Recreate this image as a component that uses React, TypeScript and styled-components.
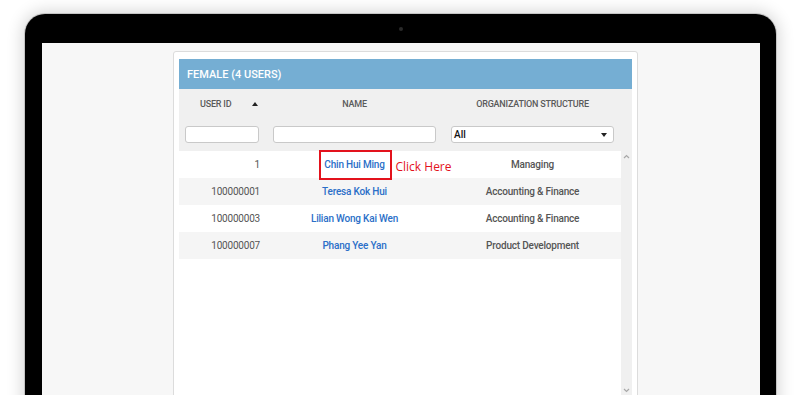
import React from 'react';
import styled, { createGlobalStyle } from 'styled-components';

// Laptop mockup with the user list panel

const GlobalStyle = createGlobalStyle`
  html, body {
    margin: 0;
    padding: 0;
    background: #ffffff;
    height: 395px;
    overflow: hidden;
  }
  body {
    font-family: Roboto, "Liberation Sans", sans-serif;
  }
`;

const Page = styled.div`
  padding: 14px 0 0 25px;
`;

const Bezel = styled.div`
  width: 751px;
  background: #000;
  border-radius: 20px 20px 0 0;
  box-shadow: 0 0 0 1px #c4c4c4, 0 0 16px 3px rgba(0, 0, 0, 0.16);
`;

const TopBar = styled.div`
  height: 29px;
  display: flex;
  align-items: center;
  justify-content: center;
`;

const Camera = styled.div`
  width: 4px;
  height: 4px;
  border-radius: 50%;
  background: #2a2a2a;
`;

const Screen = styled.div`
  margin: 0 16px 0 17px;
  height: 360px;
  overflow: hidden;
  background: #f7f7f7;
  padding: 8px 0 0 131px;
`;

const Panel = styled.div`
  width: 453px;
  height: 360px;
  background: #fff;
  border: 1px solid #dcdcdc;
  border-radius: 3px;
  padding: 7px 5px 0 5px;
`;

const PanelTitle = styled.div`
  height: 30px;
  background: #75aed3;
  color: #fff;
  font-size: 11px;
  font-weight: 500;
  display: flex;
  align-items: center;
  padding-left: 8px;
`;

const HeadArea = styled.div`
  background: #f0f0f0;
  height: 62px;
  display: grid;
  grid-template-columns: 86px 179px 177px 11px;
  grid-template-rows: 29px 33px;
`;

const ColTitle = styled.div<{ $sortable?: boolean }>`
  display: flex;
  align-items: center;
  justify-content: ${(p) => (p.$sortable ? 'flex-start' : 'center')};
  padding-left: ${(p) => (p.$sortable ? '21px' : '0')};
  font-size: 9px;
  font-weight: 500;
  letter-spacing: -0.2px;
  color: #5a5a5a;
  padding-top: 1px;
`;

const SortArrow = styled.span`
  margin-left: auto;
  margin-right: 7px;
  width: 0;
  height: 0;
  border-left: 3px solid transparent;
  border-right: 3px solid transparent;
  border-bottom: 4px solid #222;
`;

const FilterCell = styled.div`
  display: flex;
  justify-content: center;
  padding-top: 8px;
`;

const FilterInput = styled.div<{ $w: number }>`
  width: ${(p) => p.$w}px;
  height: 17px;
  box-sizing: border-box;
  background: #fff;
  border: 1px solid #c9c9c9;
  border-radius: 3px;
`;

const SelectBox = styled(FilterInput)`
  display: flex;
  align-items: center;
  justify-content: space-between;
  padding: 0 6px 0 2px;
  font-size: 10px;
  font-weight: 500;
  color: #111;
`;

const Caret = styled.span`
  width: 0;
  height: 0;
  border-left: 3px solid transparent;
  border-right: 3px solid transparent;
  border-top: 4px solid #222;
`;

const BodyArea = styled.div`
  display: flex;
  height: 244px;
`;

const Rows = styled.div`
  flex: 1;
  display: flex;
  flex-direction: column;
`;

const Row = styled.div<{ $alt: boolean }>`
  display: grid;
  grid-template-columns: 86px 179px 177px;
  height: 27px;
  background: ${(p) => (p.$alt ? '#f5f5f5' : '#fff')};
  font-size: 10px;
  letter-spacing: -0.2px;
`;

const IdCell = styled.div`
  display: flex;
  align-items: center;
  justify-content: flex-end;
  padding-right: 5px;
  color: #555;
`;

const NameCell = styled.div`
  position: relative;
  display: flex;
  align-items: center;
  justify-content: center;
  color: #2b6fc8;
  font-weight: 500;
`;

const OrgCell = styled.div`
  display: flex;
  align-items: center;
  justify-content: center;
  color: #555;
  font-weight: 500;
`;

const Highlight = styled.div`
  position: absolute;
  left: calc(50% - 36px);
  top: -1px;
  width: 73px;
  height: 30px;
  box-sizing: border-box;
  border: 2px solid #e3121c;
`;

const ClickHint = styled.div`
  position: absolute;
  left: calc(50% + 41px);
  top: 7px;
  font-family: "Open Sans", "Liberation Sans", sans-serif;
  letter-spacing: 0;
  font-weight: normal;
  font-size: 12px;
  color: #e3121c;
  white-space: nowrap;
`;

const ScrollTrack = styled.div`
  width: 11px;
  background: #f0f0f0;
  display: flex;
  flex-direction: column;
  align-items: center;
  justify-content: space-between;
  padding: 3px 0 2px;
  box-sizing: border-box;
`;

const Chevron = ({ up }: { up?: boolean }) => (
  <svg width="7" height="5" viewBox="0 0 7 5">
    <path
      d={up ? 'M1 4 L3.5 1.5 L6 4' : 'M1 1 L3.5 3.5 L6 1'}
      fill="none"
      stroke="#a8a8a8"
      strokeWidth="1.2"
    />
  </svg>
);

const users = [
  { id: '1', name: 'Chin Hui Ming', org: 'Managing' },
  { id: '100000001', name: 'Teresa Kok Hui', org: 'Accounting & Finance' },
  { id: '100000003', name: 'Lilian Wong Kai Wen', org: 'Accounting & Finance' },
  { id: '100000007', name: 'Phang Yee Yan', org: 'Product Development' },
];

const App: React.FC = () => {
  return (
    <>
      <GlobalStyle />
      <Page>
        <Bezel>
          <TopBar>
            <Camera />
          </TopBar>
          <Screen>
            <Panel>
              <PanelTitle>FEMALE (4 USERS)</PanelTitle>
              <HeadArea>
                <ColTitle $sortable>
                  USER ID
                  <SortArrow />
                </ColTitle>
                <ColTitle>NAME</ColTitle>
                <ColTitle>ORGANIZATION STRUCTURE</ColTitle>
                <div />
                <FilterCell>
                  <FilterInput $w={74} />
                </FilterCell>
                <FilterCell>
                  <FilterInput $w={163} />
                </FilterCell>
                <FilterCell>
                  <SelectBox $w={163}>
                    All
                    <Caret />
                  </SelectBox>
                </FilterCell>
                <div />
              </HeadArea>
              <BodyArea>
                <Rows>
                  {users.map((u, i) => (
                    <Row key={u.id} $alt={i % 2 === 1}>
                      <IdCell>{u.id}</IdCell>
                      <NameCell>
                        {u.name}
                        {i === 0 && (
                          <>
                            <Highlight />
                            <ClickHint>Click Here</ClickHint>
                          </>
                        )}
                      </NameCell>
                      <OrgCell>{u.org}</OrgCell>
                    </Row>
                  ))}
                </Rows>
                <ScrollTrack>
                  <Chevron up />
                  <Chevron />
                </ScrollTrack>
              </BodyArea>
            </Panel>
          </Screen>
        </Bezel>
      </Page>
    </>
  );
};

export default App;
